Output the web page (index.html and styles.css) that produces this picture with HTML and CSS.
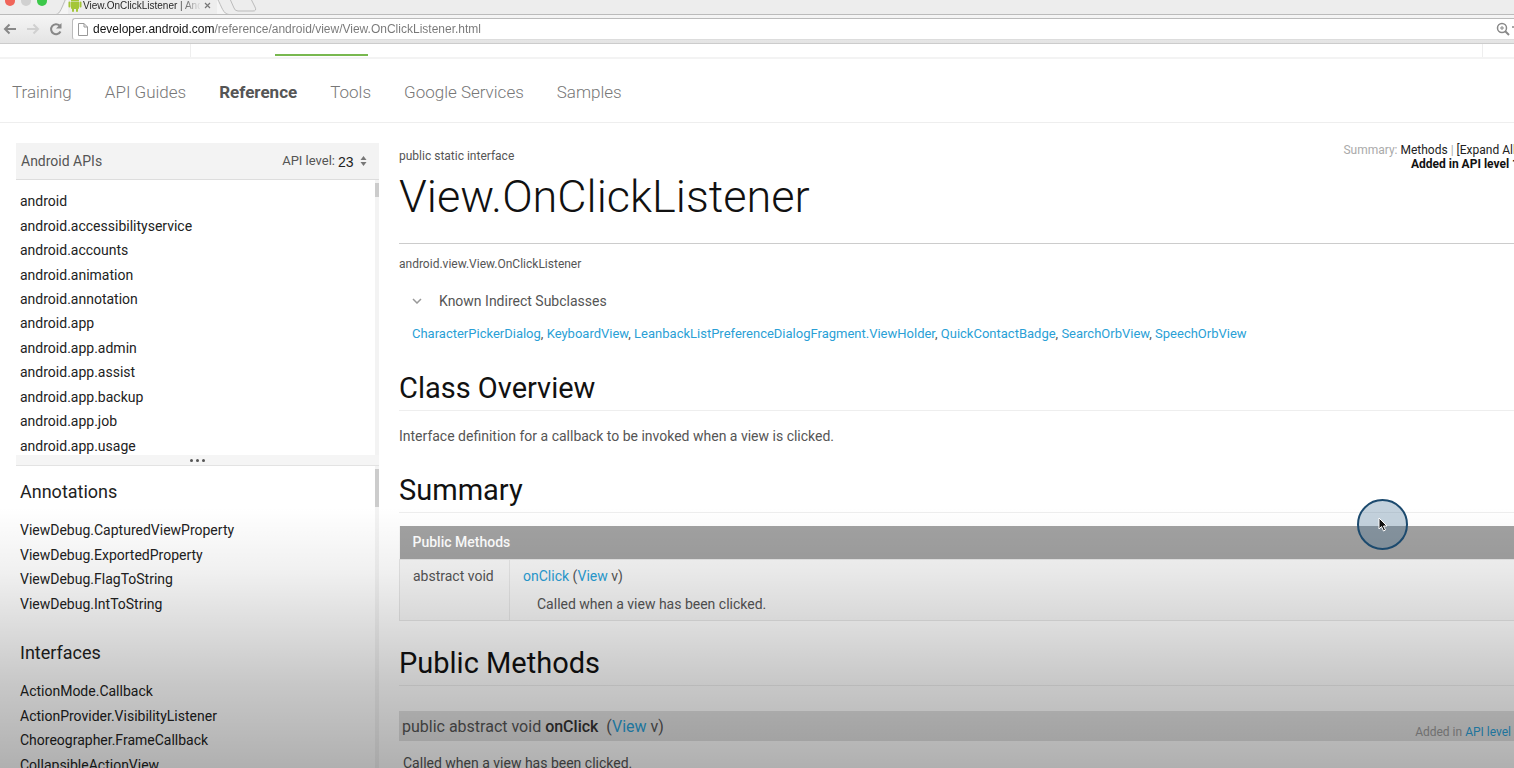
FILE: index.html
```html
<!DOCTYPE html>
<html lang="en">
<head>
    <meta charset="UTF-8">
    <meta name="viewport" content="width=device-width, initial-scale=1.0">
    <title>View.OnClickListener | Android Developers</title>
    <link rel="stylesheet" href="styles.css">
</head>
<body>
<!-- Browser window -->
<div class="tab-strip">
    <div class="lights"><i class="red"></i><i class="grey"></i><i class="green"></i></div>
    <div class="tab">
        <svg class="tab-edge" width="12" height="15" viewBox="0 0 12 15"><path d="M0 14.500C5 14 6 8 12 -2V15H0z" fill="#f5f5f5"/><path d="M0 14.500C4 14 6 7 10 -2" fill="none" stroke="#bbb"/></svg>
        <svg width="14" height="16" viewBox="0 0 14 16" fill="#a4c639"><path d="M3 5a4 4 0 0 1 8 0zM3 5.500h8V12a1 1 0 0 1-1 1H4a1 1 0 0 1-1-1zM.5 6.500a1 1 0 0 1 2 0v4a1 1 0 0 1-2 0zM11.500 6.500a1 1 0 0 1 2 0v4a1 1 0 0 1-2 0zM4 12h2v3a1 1 0 0 1-2 0zM8 12h2v3a1 1 0 0 1-2 0z"/></svg>
        <span class="tab-title">View.OnClickListener | And</span>
        <button class="tab-close" aria-label="Close tab"><svg width="7" height="7" viewBox="0 0 7 7"><path d="M1 1l5 5M6 1L1 6" stroke="#777" stroke-width="1.200"/></svg></button>
        <svg class="tab-end" width="12" height="15" viewBox="0 0 12 15"><path d="M0 -2C6 8 5 14 12 14.500V15H0z" fill="#f5f5f5"/><path d="M0 -2C5 7 6 14 12 14.500" fill="none" stroke="#bbb"/></svg>
    </div>
    <button class="new-tab" aria-label="New tab"><svg width="28" height="15" viewBox="0 0 28 15"><path d="M1 -1l4 9q1 3 4 3h15q4 0 2-4l-4-8" fill="#ededed" stroke="#bbb"/></svg></button>
</div>
<div class="toolbar">
    <button aria-label="Back"><svg width="14" height="12" viewBox="0 0 14 12"><path d="M13 6H2M6.500 1.500L2 6l4.500 4.500" fill="none" stroke="#888" stroke-width="2"/></svg></button>
    <button aria-label="Forward"><svg width="14" height="12" viewBox="0 0 14 12"><path d="M1 6h11M7.500 1.500L12 6l-4.500 4.500" fill="none" stroke="#d0d0d0" stroke-width="2"/></svg></button>
    <button aria-label="Reload"><svg width="14" height="14" viewBox="0 0 14 14"><path d="M11.500 9.500A5 5 0 1 1 10.500 3.500" fill="none" stroke="#888" stroke-width="2"/><path d="M12.500 1v5.500H7z" fill="#888"/></svg></button>
    <div class="address">
        <svg width="10" height="13" viewBox="0 0 10 13"><path d="M.5 .5h5.500l3.500 3.500v8.500h-9zM6 .5V4h3.500" fill="none" stroke="#999"/></svg>
        <input type="text" aria-label="Address" value="developer.android.com/reference/android/view/View.OnClickListener.html">
        <svg width="18" height="14" viewBox="0 0 18 14"><circle cx="6" cy="6" r="4.500" fill="none" stroke="#888" stroke-width="1.500"/><path d="M9 9l4 4" stroke="#888" stroke-width="2"/><path d="M4 6h4M6 4v4" stroke="#888"/><circle cx="17" cy="5" r="1" fill="#888"/></svg>
    </div>
</div>

<!-- Site header -->
<div class="masthead"><div class="masthead-left"></div><div class="masthead-current"></div><div class="masthead-right"></div></div>
<nav class="main-nav">
    <a href="#">Training</a>
    <a href="#">API Guides</a>
    <a href="#" class="selected">Reference</a>
    <a href="#">Tools</a>
    <a href="#">Google Services</a>
    <a href="#">Samples</a>
</nav>

<div class="page">
    <aside class="sidebar">
        <div class="api-header">
            <span>Android APIs</span>
            <label for="apiLevel">API level:</label>
            <select id="apiLevel"><option>23</option></select>
            <svg width="7" height="10" viewBox="0 0 7 10" fill="#777"><path d="M3.500 0L6.500 4h-6zM3.500 10L.5 6h6z"/></svg>
        </div>
        <div class="packages">
            <ul class="links">
                <li><a href="#">android</a></li>
                <li><a href="#">android.accessibilityservice</a></li>
                <li><a href="#">android.accounts</a></li>
                <li><a href="#">android.animation</a></li>
                <li><a href="#">android.annotation</a></li>
                <li><a href="#">android.app</a></li>
                <li><a href="#">android.app.admin</a></li>
                <li><a href="#">android.app.assist</a></li>
                <li><a href="#">android.app.backup</a></li>
                <li><a href="#">android.app.job</a></li>
                <li><a href="#">android.app.usage</a></li>
            </ul>
            <div class="track"><div class="thumb"></div></div>
        </div>
        <div class="resizer"><i></i><i></i><i></i></div>
        <div class="classes">
            <div class="class-list">
                <h2>Annotations</h2>
                <ul class="links">
                    <li><a href="#">ViewDebug.CapturedViewProperty</a></li>
                    <li><a href="#">ViewDebug.ExportedProperty</a></li>
                    <li><a href="#">ViewDebug.FlagToString</a></li>
                    <li><a href="#">ViewDebug.IntToString</a></li>
                </ul>
                <h2>Interfaces</h2>
                <ul class="links">
                    <li><a href="#">ActionMode.Callback</a></li>
                    <li><a href="#">ActionProvider.VisibilityListener</a></li>
                    <li><a href="#">Choreographer.FrameCallback</a></li>
                    <li><a href="#">CollapsibleActionView</a></li>
                </ul>
            </div>
            <div class="track"><div class="thumb"></div></div>
        </div>
    </aside>

    <main class="content">
        <div class="title-row">
            <div>
                <div class="kind">public static interface</div>
                <h1>View.OnClickListener</h1>
            </div>
            <div class="api-info">
                Summary: <a href="#">Methods</a> | <a href="#">[Expand All]</a><br>
                <a href="#" class="level">Added in API level 1</a>
            </div>
        </div>
        <div class="full-name">android.view.View.OnClickListener</div>
        <button class="expander">
            <svg width="10" height="6" viewBox="0 0 10 6"><path d="M1 1l4 4 4-4" fill="none" stroke="#999" stroke-width="1.500"/></svg>
            Known Indirect Subclasses
        </button>
        <p class="subclasses"><a href="#">CharacterPickerDialog</a>, <a href="#">KeyboardView</a>, <a href="#">LeanbackListPreferenceDialogFragment.ViewHolder</a>, <a href="#">QuickContactBadge</a>, <a href="#">SearchOrbView</a>, <a href="#">SpeechOrbView</a></p>

        <h2>Class Overview</h2>
        <p class="overview">Interface definition for a callback to be invoked when a view is clicked.</p>

        <h2>Summary</h2>
        <table class="methods">
            <tr><th colspan="2">Public Methods</th></tr>
            <tr>
                <td class="type">abstract void</td>
                <td>
                    <div><a href="#">onClick</a> (<a href="#">View</a> v)</div>
                    <div class="descr">Called when a view has been clicked.</div>
                </td>
            </tr>
        </table>

        <h2>Public Methods</h2>
        <div class="signature">
            <h4>public abstract void <b>onClick</b> &nbsp;(<a href="#">View</a> v)</h4>
            <div class="since">Added in <a href="#">API level</a></div>
        </div>
        <p class="detail">Called when a view has been clicked.</p>
    </main>
</div>

<div class="shade"></div>
<div class="pointer"><svg width="10" height="15" viewBox="0 0 10 15"><path d="M1 1v11l2.500-2.500L5.500 14l2-1-2-4H9z" fill="#111" stroke="#fff"/></svg></div>
</body>
</html>
```

FILE: styles.css
```css
* {
    box-sizing: border-box;
}
body {
    margin: 0;
    height: 100vh;
    overflow: hidden;
    display: flex;
    flex-direction: column;
    position: relative;
    background-color: #fff;
    color: #555;
    font-family: Roboto, sans-serif;
    font-size: 14px;
    line-height: 20px;
}
a {
    color: #2a9fd6;
    text-decoration: none;
}
button {
    border: none;
    background: none;
    padding: 0;
    font: inherit;
    color: inherit;
}
svg {
    display: block;
    flex: none;
}
ul, h1, h2, h4, p {
    margin: 0;
    padding: 0;
    font-weight: normal;
}

/* Browser window */
.tab-strip {
    display: flex;
    flex: none;
    height: 15px;
    overflow: hidden;
    background-color: #ededed;
    border-bottom: 1px solid #bbb;
}
.lights {
    display: flex;
    gap: 6px;
    width: 56px;
    padding-left: 5px;
}
.lights i {
    width: 10px;
    height: 10px;
    margin-top: -4px;
    border-radius: 50%;
}
.red { background-color: #f0655a; }
.grey { background-color: #d0d0d0; }
.green { background-color: #3cc84a; }
.tab {
    display: flex;
    height: 15px;
    align-items: flex-start;
}
.tab > svg:nth-child(2) {
    margin-top: -4px;
}
.tab-title {
    width: 117px;
    margin-left: 1px;
    white-space: nowrap;
    font: 10px/12px "Liberation Sans", sans-serif;
    background: linear-gradient(90deg, #222 80%, #ddd);
    background-clip: text;
    -webkit-text-fill-color: transparent;
}
.tab-close {
    margin: 2px 6px 0 4px;
}
.new-tab {
    display: flex;
}
.toolbar {
    display: flex;
    flex: none;
    align-items: center;
    gap: 9px;
    height: 29px;
    padding: 0 0 0 3px;
    background: linear-gradient(#f5f5f5, #e4e4e4);
    border-bottom: 1px solid #ccc;
}
.address {
    display: flex;
    flex: 1;
    align-items: center;
    gap: 5px;
    height: 22px;
    padding-left: 5px;
    background-color: #fff;
    border: 1px solid #bbb;
    border-bottom-color: #ddd;
    border-right: none;
    border-radius: 3px 0 0 3px;
}
.address input {
    flex: 1;
    border: none;
    padding: 0;
    outline: none;
    font: 12px/16px "Liberation Sans", sans-serif;
    background: linear-gradient(90deg, #111 121px, #777 121px);
    background-clip: text;
    -webkit-text-fill-color: transparent;
}

/* Site header */
.masthead {
    display: flex;
    flex: none;
    height: 15px;
    border-bottom: 2px solid #f3f3f3;
}
.masthead-left {
    width: 191px;
    margin-right: 84px;
    border-right: 1px solid #eee;
}
.masthead-current {
    width: 93px;
    height: 12px;
    border-bottom: 2px solid #78b84f;
}
.masthead-right {
    width: 32px;
    margin-left: auto;
    border-left: 1px solid #eee;
}
.main-nav {
    display: flex;
    flex: none;
    gap: 33px;
    height: 64px;
    padding: 2px 12px 0;
    align-items: center;
    border-bottom: 1px solid #eee;
    font-size: 17px;
    font-weight: 300;
}
.main-nav a {
    color: #777;
}
.main-nav .selected {
    color: #555;
    font-weight: 700;
}

.page {
    display: flex;
    flex: 1;
    min-height: 0;
    gap: 20px;
    padding: 20px 0 0 16px;
}

/* Sidebar */
.sidebar {
    display: flex;
    flex: none;
    flex-direction: column;
    width: 363px;
}
.api-header {
    display: flex;
    flex: none;
    align-items: center;
    height: 37px;
    padding: 0 12px 0 5px;
    background-color: #f3f3f3;
    border-bottom: 1px solid #ddd;
}
.api-header label {
    margin-left: auto;
    font-size: 13px;
}
.api-header select {
    appearance: none;
    width: 20px;
    margin: 2px 2px 0 3px;
    padding: 0;
    border: none;
    background: none;
    color: #222;
    font: 14px/20px "Liberation Sans", sans-serif;
}
.packages {
    display: flex;
    flex: none;
    height: 275px;
    overflow: hidden;
}
.links {
    display: grid;
    grid-auto-rows: 1fr;
    flex: 1;
    height: 98px;
    align-items: center;
    list-style: none;
}
.links a {
    color: #222;
}
.packages .links {
    height: 269px;
    margin: 9px 0 0 4px;
}
.track {
    flex: none;
    width: 4px;
    padding-top: 3px;
    background-color: #f3f3f3;
}
.thumb {
    height: 14px;
    background-color: #ccc;
}
.resizer {
    display: flex;
    flex: none;
    justify-content: center;
    align-items: center;
    gap: 3px;
    height: 11px;
    background-color: #f5f5f5;
    border-bottom: 1px solid #e3e3e3;
}
.resizer i {
    width: 3px;
    height: 3px;
    border-radius: 50%;
    background-color: #555;
}
.classes {
    display: flex;
    flex: 1;
    min-height: 0;
    overflow: hidden;
}
.class-list {
    flex: 1;
    padding: 14px 0 0 4px;
}
.class-list h2 {
    margin-bottom: 14px;
    color: #222;
    font-size: 18px;
    line-height: 24px;
}
.class-list .links {
    margin-bottom: 25px;
}
.classes .thumb {
    height: 38px;
}

/* Main column, runs a little past the window edge */
.content {
    flex: 1;
    min-width: 0;
    margin-right: -5px;
}
.title-row {
    display: flex;
    justify-content: space-between;
    height: 101px;
    border-bottom: 1px solid #ccc;
}
.kind {
    margin-top: 3px;
    font-size: 12px;
}
h1 {
    color: #111;
    font-size: 45px;
    font-weight: 300;
    line-height: 62px;
}
.api-info {
    color: #aaa;
    font-size: 12px;
    line-height: 14px;
    text-align: right;
}
.api-info a {
    color: #222;
}
.api-info .level {
    color: #111;
    font-weight: 700;
}
.full-name {
    margin: 10px 0 17px;
    font-size: 12px;
}
.expander {
    display: flex;
    align-items: center;
    gap: 17px;
    margin-left: 13px;
}
.subclasses {
    margin: 13px 0 26px 13px;
    font-size: 13px;
}
.content h2 {
    height: 41px;
    color: #111;
    font-size: 29px;
    line-height: 36px;
    border-bottom: 1px solid #eee;
}
.overview {
    margin: 15px 0 26px;
}
.methods {
    width: 100%;
    margin: 13px 0 24px;
    border-collapse: collapse;
    background-color: #f7f7f7;
}
.methods th {
    height: 33px;
    padding: 0 13px;
    background-color: #a2a2a2;
    color: #fff;
    font-weight: 500;
    text-align: left;
}
.methods td {
    height: 61px;
    padding: 6px 13px;
    border: 1px solid #e6e6e6;
    vertical-align: top;
}
.methods .type {
    width: 110px;
    white-space: nowrap;
}
.descr {
    margin: 8px 0 0 14px;
}
.signature {
    display: flex;
    justify-content: space-between;
    height: 30px;
    margin-top: 25px;
    padding: 0 8px 0 3px;
    background-color: #e2e2e2;
}
.signature h4 {
    font-size: 16px;
    line-height: 32px;
}
.signature b {
    color: #333;
    font-weight: 500;
}
.since {
    color: #999;
    font-size: 12px;
    line-height: 42px;
}
.detail {
    margin: 12px 4px;
}

/* Darkening over the lower part of the window */
.shade {
    position: absolute;
    inset: 66% 0 0 0;
    background: linear-gradient(transparent, rgba(0, 0, 0, 0.060) 25%, rgba(0, 0, 0, 0.220) 68%, rgba(0, 0, 0, 0.310));
    pointer-events: none;
}
.pointer {
    position: absolute;
    left: 1357px;
    top: 499px;
    display: flex;
    align-items: center;
    justify-content: center;
    width: 51px;
    height: 51px;
    border: 2px solid #1c4a6e;
    border-radius: 50%;
    background-color: rgba(70, 115, 150, 0.320);
}
```
